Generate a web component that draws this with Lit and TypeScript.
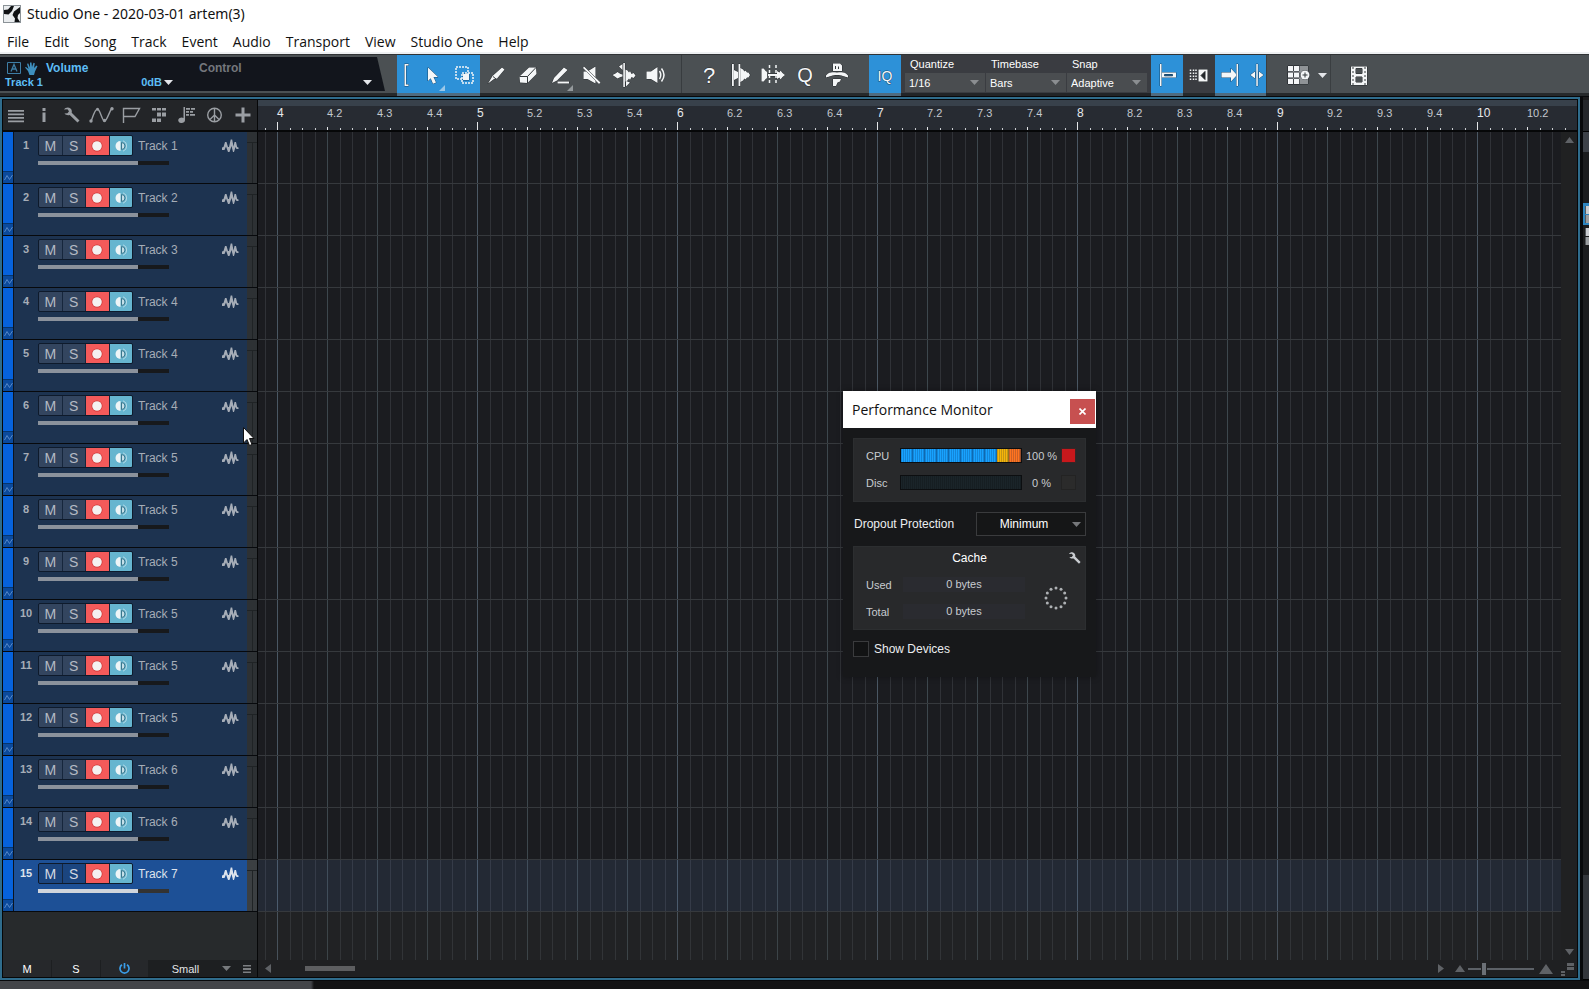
import { LitElement, html, css, svg } from "lit";
import { customElement, state } from "lit/decorators.js";
import { classMap } from "lit/directives/class-map.js";

const MENUS = ["File", "Edit", "Song", "Track", "Event", "Audio", "Transport", "View", "Studio One", "Help"];
const TRACKS = [1, 2, 3, 4, 4, 4, 5, 5, 5, 5, 5, 5, 6, 6, 7];
const BEATS = Array.from({ length: 26 }, (_, i) => {
  const bar = 4 + Math.floor(i / 4);
  return { bar: i % 4 === 0, label: i % 4 === 0 ? `${bar}` : `${bar}.${(i % 4) + 1}` };
});

const icon = (body: unknown, w = 26, h = 26) =>
  html`<svg class="ic" width=${w} height=${h} viewBox="0 0 ${w} ${h}" aria-hidden="true">${body}</svg>`;

const down = (cls = "") => html`<svg class="down ${cls}" width="9" height="5" viewBox="0 0 9 5" aria-hidden="true"><path d="M0 0h9L4.500 5z" /></svg>`;

const wrench = svg`<path d="M0 2.500C1 .5 4.500-.5 6.500 1.500 8 3 8 4.500 7.700 5.700L14.500 12.500 12.500 14.800 5.700 8C3.800 8.600 1.500 8 .5 6.500L3.500 6.200 5 4.200 3.500 2.300Z"/>`;

const HEAD_ICONS: Array<[string, unknown]> = [
  ["Track list", svg`<path d="M-1 3h16v1.700H-1zM-1 6.500h16v1.700H-1zM-1 10h16v1.700H-1zM-1 13.500h16v1.700H-1z"/>`],
  ["Inspector", svg`<path d="M5.500 1h3v3h-3zM5.500 5.500h3V15h-3z"/>`],
  ["Tools", svg`<path d="M-2 2.500C-1 .5 2.500-.5 4.500 1.500 6 3 6 4.500 5.700 5.700L13.500 13.500 11.500 15.500 3.700 8C1.800 8.600-.5 8-1.500 6.500L1.500 6.200 3 4.200 1.500 2.300Z"/>`],
  ["Automation", svg`<path class="ln" d="M-3 14.500C-1 9 1 2 3.500 2S8 14 10.500 14 15 5 18 1"/><circle cx="-3" cy="14" r="1.700"/><circle cx="3.500" cy="2.200" r="1.500"/><circle cx="10.500" cy="13.500" r="1.700"/><circle cx="18" cy="1.800" r="1.700"/>`],
  ["Markers", svg`<path class="ln" d="M1.500 16V1.500H17.500L13 9.500H1.500"/>`],
  ["Arranger", svg`<path d="M2 1h4v2.500H2zM7 1h4v2.500H7zM12 1h4v2.500h-4zM7 5.500h4v4H7zM12 5.500h4v4h-4zM2 11.500h4v3.500H2zM7 11.500h4v3.500H7z"/>`],
  ["Chords", svg`<path d="M5.500 0h1.500v13a3.400 2.700 0 1 1-1.500-2zM8 1h4v1.700H8zM13 1h4v1.700h-4zM8 4h3v1.700H8zM12 4h3v1.700h-3zM8 7h3v1.700H8zM12 7h5v1.700h-5z"/>`],
  ["Tempo", svg`<circle class="ln" cx="7.500" cy="8" r="6.800"/><path class="ln" d="M7.500 1.500V8L3 12.500M7.500 8l4.500 4.500M7.500 4v10"/>`],
  ["Add track", svg`<path d="M6.500.5h3v6h6v3h-6v6h-3v-6h-6v-3h6z"/>`],
];

const EDIT_TOOLS: Array<[string, unknown, boolean]> = [
  ["Split", svg`<path d="M5 21.500 9.500 14 19 5.500 21.500 7.500 14 16.500 11 17z"/><path class="dk" d="M10 14.500l3 2.500"/>`, false],
  ["Eraser", svg`<path d="M4.500 14.500 14 5.500h7L21.500 12 12.500 21 5 20.500z"/><path class="dk" d="M4.500 14.500h8l8.500-9M12.500 14.500v6.500"/>`, false],
  ["Paint", svg`<path d="M5 21 7 16 17 5.500 20.500 8 10 18.500z"/><path d="M10.500 19.500h11.500v2H10.500z"/>`, true],
  ["Mute", svg`<path d="M4.500 9.500h4L16.500 4.500v17L8.500 17h-4z"/><path d="M5 4.500 21.500 20.500 20 22 4 6z"/>`, false],
  ["Bend", svg`<path d="M12.300 1h1.600v24h-1.600zM8 4.500 11.500 2v6zM15 19l4 1.500-4 4zM1.500 13l3-1.500 2-1.500 3 2 2 .5v2l-2 .5-3 1.500-2-1.500zM14.500 7.500l2 1 1.500 2 1-1.500 1.500 3 2-1 2 2.500-2 2.500-2-1-1.500 3-1-1.500-1.500 2-2 1z"/>`, false],
  ["Listen", svg`<path d="M3.500 9.500h4.500L14.500 5v16L8 17H3.500z"/><path class="wl" d="M16.500 9q2.500 4 0 8M18.500 6.500q5 6.500 0 13"/>`, false],
];

const GRID_TOOLS: Array<[string, unknown]> = [
  ["Help", svg`<text x="13" y="21" text-anchor="middle" font-size="22">?</text>`],
  ["Strip silence", svg`<path d="M4 2h1.800v22H4zM10.500 2h1.800v22h-1.800zM6 8l4 2v6l-4 2zM12.500 6l2.500 1.500 1.500 2 1-1 1.500 2h1.500l1.500 2.500-1.500 2.500H19l-1.500 2-1-1-1.500 2-2.500 1.500z"/>`],
  ["Audio bend", svg`<path d="M1.500 6.500h2.200l2 2.500 1.500 1v6l-1.500 1-2 2.500H1.500zM8 12h10v2H8zM17 9l2.500 1.500 1-2 2 2.500 2.500 2-2.500 2-2 2.500-1-2L17 17z"/><path class="wl" stroke-dasharray="3 2" d="M9.500 3v20M16 3v20"/>`],
  ["Quantize", svg`<text x="13" y="20" text-anchor="middle" font-size="20">Q</text>`],
  ["Macro", svg`<path d="M9 1.500h7l2 2V9H9zM2 13.500C6 9 9 10.500 13 10.500s7-1.500 11 3v2c-4-1-6-2.500-11-2.500S6 14.500 2 15.500zM9 17h8l-1 2.500-2.500 1-1.500 3.500H9z"/><path class="dk" d="M11.500 4v3M14.500 4.500V7"/>`],
];

@customElement("track-row")
class TrackRow extends LitElement {
  static properties = { index: { type: Number }, name: { type: String }, selected: { type: Boolean } };
  declare index: number;
  declare name: string;
  declare selected: boolean;

  static styles = css`
    :host { display: block; height: 51px; border-bottom: 1px solid #07090c; }
    .row { display: grid; grid-template-columns: 10px 233px 10px; column-gap: 1px; height: 51px; background: #0b1420; font: 12px/16px "Liberation Sans", Arial, sans-serif; color: #a6adb7; }
    .stripe { display: flex; flex-direction: column; justify-content: flex-end; background: #0662dc; }
    .env { height: 11px; border-top: 1px solid #06366e; background: #0b4a9c; display: flex; align-items: center; justify-content: center; }
    .env svg { fill: none; stroke: #5688c8; }
    .main { display: grid; grid-template-columns: 24px 1fr; grid-template-rows: 21px 4px; row-gap: 5px; padding-top: 3px; background: #1d3350; align-content: start; }
    .no { text-align: center; font: bold 11px/20px "Liberation Sans", Arial, sans-serif; }
    .ctl { display: flex; align-items: center; }
    .btns { display: flex; gap: 1px; height: 21px; border: 1px solid #0e1a2b; border-radius: 2px; background: #16263c; box-sizing: border-box; width: 95px; overflow: hidden; }
    button { flex: 1; border: 0; padding: 0; background: #33455f; color: #b4bac4; font: 14px/18px "Liberation Sans", Arial, sans-serif; display: flex; align-items: center; justify-content: center; }
    .rec { background: #f45a5a; }
    .mon { background: #66b5cf; }
    .name { flex: 1; padding-left: 5px; }
    .wave { fill: #a6adb7; margin-right: 8px; }
    .vol { grid-column: 2; appearance: none; margin: 0; width: 131px; height: 4px; background: linear-gradient(90deg, #8b929c 76%, #17191c 76%); }
    .vol::-webkit-slider-thumb { appearance: none; width: 1px; height: 4px; opacity: 0; }
    .meter { margin-left: -1px; background: linear-gradient(#1f2325, #1f2325) 0 10px / 100% 1px no-repeat, linear-gradient(90deg, transparent 5px, #1f2325 5px, #1f2325 6px, transparent 6px) 0 11px no-repeat, #2d3134; }
    .sel .main { background: #1d5096; }
    .sel button.ms { background: #1b457f; color: #d3d9e2; }
    .sel, .sel .no { color: #dde3ec; }
    .sel .wave { fill: #dde3ec; }
    .sel .vol { background: linear-gradient(90deg, #d0d5dc 76%, #333 76%); }
    .sel .meter { background-color: #3b3f42; }
  `;

  render() {
    return html`<div class=${classMap({ row: true, sel: this.selected })}>
      <div class="stripe"><div class="env"><svg width="9" height="7" viewBox="0 0 9 7"><path d="M.5 6 3 1.500 5.500 5.500 8.500 1" /></svg></div></div>
      <div class="main">
        <div class="no">${this.index}</div>
        <div class="ctl">
          <div class="btns">
            <button class="ms" aria-label="Mute">M</button>
            <button class="ms" aria-label="Solo">S</button>
            <button class="rec" aria-label="Record"><svg width="12" height="12" viewBox="0 0 12 12"><circle cx="6" cy="6" r="5.500" fill="#c33" /><circle cx="6" cy="6" r="4.800" fill="#f4f1f0" /></svg></button>
            <button class="mon" aria-label="Monitor"><svg width="12" height="12" viewBox="0 0 12 12"><path d="M5.500 1v10a5 5 0 0 1 0-10z" fill="#eef5f7" /><path d="M6.500 2.500v7a3.500 3.500 0 0 0 0-7z" fill="#c4dfe8" stroke="#39778d" /><path d="M8 .8a5.500 5.500 0 0 1 0 10.400" fill="none" stroke="#b5dae6" /></svg></button>
          </div>
          <div class="name">${this.name}</div>
          <svg class="wave" width="18" height="14" viewBox="0 0 18 14"><path d="M1 8.500 2.500 8 4 3H5.500L7 8H8L9.700.5H11.200L12.500 7.500 13.500 3H15L16.200 8 17.500 8.500V10H15.500L14.500 8 13 13H12L10.500 7 8.500 13H7L5 7.500 3.500 11H1z" /></svg>
        </div>
        <input class="vol" type="range" min="0" max="100" value="76" aria-label="Volume of ${this.name}" />
      </div>
      <div class="meter"></div>
    </div>`;
  }
}

@customElement("performance-monitor")
class PerformanceMonitor extends LitElement {
  static styles = css`
    :host { display: block; width: 253px; background: #17181a; color: #eceef0; font: 12px/16px "Liberation Sans", Arial, sans-serif; box-shadow: 0 0 6px rgba(0, 0, 0, 0.35); }
    .bar { display: flex; align-items: center; justify-content: space-between; height: 37px; padding: 0 1px 0 9px; background: #fff; color: #111; font: 14px/20px "Open Sans", "Noto Sans", sans-serif; }
    .close { width: 25px; height: 25px; margin-top: 4px; border: 0; padding: 0; background: #c75050; display: flex; align-items: center; justify-content: center; }
    .body { display: flex; flex-direction: column; gap: 10px; padding: 10px 10px 20px; }
    .panel { background: #28292b; border: 1px solid #2c2e30; box-sizing: border-box; color: #c9ccd0; font-size: 11px; }
    .load { display: grid; grid-template-columns: 34px 122px 39px 15px; grid-auto-rows: 15px; row-gap: 12px; padding: 9px 9px 11px 12px; align-items: center; }
    .meter { box-sizing: border-box; height: 15px; border: 1px solid #0c0e10; background: repeating-linear-gradient(90deg, #1a2429 0 1px, #161e22 1px 2px); }
    .fill { height: 100%; background: repeating-linear-gradient(90deg, rgba(0, 20, 60, 0.2) 0 1px, transparent 1px 2px), repeating-linear-gradient(90deg, transparent 0 11px, rgba(0, 20, 60, 0.4) 11px 12px), linear-gradient(90deg, #18a2ff 80%, #f5b50a 80%, #f5b50a 90%, #ff7420 90%); }
    .val { text-align: center; }
    .led { box-sizing: border-box; height: 15px; border: 1px solid #232323; background: #2b2b2b; }
    .led.on { background: #c8181c; border-color: #3a2526; }
    .drop { display: flex; align-items: center; justify-content: space-between; height: 24px; padding-left: 1px; }
    .pick { display: grid; align-items: center; width: 110px; }
    .pick > * { grid-area: 1 / 1; }
    select { appearance: none; height: 24px; border: 1px solid #3a3b3d; background: #151617; color: #fff; font: 12px/16px "Liberation Sans", Arial, sans-serif; padding: 0 14px 0 0; text-align: center; text-align-last: center; border-radius: 0; }
    .down { justify-self: end; margin-right: 5px; fill: #76787b; pointer-events: none; }
    .cache { display: grid; grid-template-columns: 37px 122px 1fr; grid-template-rows: 30px 15px 12px 15px; padding: 0 4px 10px 12px; align-items: center; height: 84px; }
    .head { grid-column: 1 / -1; align-self: start; display: flex; align-items: center; justify-content: space-between; color: #fff; font-size: 12px; height: 22px; }
    .head span { flex: 1; text-align: center; padding-left: 4px; }
    .head button { border: 0; padding: 0; background: none; display: flex; fill: #c9ccd0; }
    .box { background: #2a2b30; text-align: center; height: 15px; line-height: 15px; }
    .t { grid-row: 4; }
    .spin { grid-row: 2 / 5; grid-column: 3; justify-self: center; margin-left: 5px; fill: #aeb1b4; }
    .chk { display: flex; align-items: center; gap: 5px; padding-top: 1px; }
    .chk input { appearance: none; margin: 0; width: 16px; height: 16px; border: 1px solid #3a3b3d; background: #121314; }
  `;

  render() {
    const dots = Array.from({ length: 12 }, (_, i) => {
      const a = (i * Math.PI) / 6;
      return svg`<circle cx=${12 + 10 * Math.sin(a)} cy=${12 - 10 * Math.cos(a)} r="1.500"/>`;
    });
    return html`
      <div class="bar">Performance Monitor<button class="close" aria-label="Close"><svg width="7" height="7" viewBox="0 0 7 7"><path d="M.5.5l6 6M6.500.5l-6 6" stroke="#fff" stroke-width="1.600" /></svg></button></div>
      <div class="body">
        <div class="panel load">
          <span>CPU</span><div class="meter" role="meter" aria-valuenow="100" aria-label="CPU"><div class="fill"></div></div><span class="val">100 %</span><span class="led on"></span>
          <span>Disc</span><div class="meter" role="meter" aria-valuenow="0" aria-label="Disc"></div><span class="val">0 %</span><span class="led"></span>
        </div>
        <div class="drop"><label for="dp">Dropout Protection</label>
          <div class="pick"><select id="dp"><option>Minimum</option></select>${down()}</div></div>
        <div class="panel cache">
          <div class="head"><span>Cache</span><button aria-label="Cache settings"><svg width="12" height="12" viewBox="0 0 15 15">${wrench}</svg></button></div>
          <span>Used</span><span class="box">0 bytes</span>
          <span class="t">Total</span><span class="box t">0 bytes</span>
          <svg class="spin" width="24" height="24" viewBox="0 0 24 24">${dots}</svg>
        </div>
        <label class="chk"><input type="checkbox" />Show Devices</label>
      </div>`;
  }
}

@customElement("app-root")
class AppRoot extends LitElement {
  @state() private selected = 14;

  static styles = css`
    :host { display: flex; flex-direction: column; height: 100vh; overflow: hidden; position: relative; background: #111214; color: #fff; font: 11px/14px "Liberation Sans", Arial, sans-serif; }
    button { border: 0; padding: 0; margin: 0; background: none; color: inherit; font: inherit; }
    .title { display: flex; align-items: center; gap: 6px; height: 28px; padding: 0 3px; background: #fff; color: #111; font: 14px/20px "Noto Sans", "Open Sans", sans-serif; }
    .menu { display: flex; align-items: center; gap: 15px; height: 26px; padding: 3px 7px 0; box-sizing: border-box; border-bottom: 2px solid #eef0f2; background: #fff; font: 14px/20px "Open Sans", "Noto Sans", sans-serif; }
    .menu a { color: #111; text-decoration: none; }

    .tools { display: flex; height: 42px; background: #4b5053; border-top: 1px solid #303335; border-bottom: 3px solid #26292b; box-sizing: border-box; }
    .param { width: 385px; height: 34px; margin: 2px 12px 0 0; box-sizing: border-box; padding: 4px 12px 0 5px; background: #12151c; clip-path: polygon(0 0, 377px 0, 385px 100%, 0 100%); color: #5dbdf5; font-weight: bold; display: grid; grid-template-columns: 194px 1fr; grid-template-rows: 14px 14px; }
    .param div { display: flex; align-items: center; }
    .param .vol { font-size: 12px; gap: 4px; padding-left: 2px; }
    .param .vol span { padding-left: 4px; }
    .param .ctl { font-size: 12px; color: #74777c; }
    .param .trk { font-size: 11px; justify-content: space-between; padding-right: 26px; }
    .param .val { gap: 2px; }
    .param .end { justify-content: flex-end; padding-right: 1px; }
    .down { fill: #8b8e91; }
    .down.lt { fill: #e4e6ea; }
    .set { display: flex; height: 38px; }
    .set button { width: 32px; display: flex; align-items: center; justify-content: center; position: relative; padding-top: 2px; }
    .set button.br { width: 19px; }
    .set button.w20 { width: 19px; }
    .blue { background: #2d91d8; box-shadow: 0 3px 0 #4f6b80; }
    .ic { fill: #f4f6f7; stroke: #272b2e; stroke-width: 1; paint-order: stroke; overflow: visible; font-family: "Liberation Sans", Arial, sans-serif; }
    .blue .ic { stroke: #174a72; }
    .ic .dk { fill: none; stroke: #33383b; }
    .ic .wl { fill: none; stroke: #f4f6f7; stroke-width: 1.500; }
    .corner { position: absolute; right: 3px; bottom: 2px; border: 3px solid #94999c; border-top-color: transparent; border-left-color: transparent; }
    .blue .corner { border-right-color: #9cc8e8; border-bottom-color: #9cc8e8; }
    .gap { width: 10px; border-right: 1px solid #383c3f; margin-right: 11px; box-sizing: border-box; }
    .gap2 { width: 16px; }
    .opts { display: flex; gap: 1px; padding: 0 4px; background: #3a3c41; box-shadow: 0 3px 0 #222427; }
    .opt { display: grid; grid-template: 18px 19px / 80px; align-items: center; }
    .opt label { padding-left: 5px; }
    .opt select { grid-area: 2 / 1; height: 19px; border: 0; border-radius: 0; appearance: none; background: #4a4d50; color: #fff; font: 11px/14px "Liberation Sans", Arial, sans-serif; padding: 0 16px 0 4px; }
    .opt .down { grid-area: 2 / 1; justify-self: end; margin-right: 6px; pointer-events: none; }
    .dark { background: #3a3c41; }
    .vsep { width: 1px; background: #3a3e41; }
    .set button.preset { width: 64px; padding-left: 18px; box-sizing: border-box; gap: 8px; border-right: 1px solid #3a3e41; }
    .set button.film { width: 56px; }

    .work { flex: 1; min-height: 0; display: grid; grid-template-columns: 1fr 6px; column-gap: 3px; padding: 1px 0; background: #08090b; }
    .frame { border: 2px solid #2f6c8c; padding: 1px; background: #060708; display: grid; grid-template: 32px 1fr 17px / 254px 1fr; column-gap: 1px; min-height: 0; min-width: 0; }
    .side { display: flex; flex-direction: column; padding-top: 3px; background: #1b1b1c; }
    .side i { display: block; }
    .s1 { height: 31px; background: #25272b; }
    .s2 { height: 20px; background: #3d4148; border-top: 1px solid #000; }
    .s3 { height: 51px; background: #1b1c1e; }
    .side .sb { height: 22px; background: #2d85c0; display: flex; flex-direction: column; justify-content: center; padding-left: 2px; }
    .side .sb i, .side .sg i { height: 8px; background: #c9ccd0; border-left: 1px solid #55595d; }
    .side .sb i + i, .side .sg i + i { background: #9a9da0; margin-top: 1px; }
    .side .sg { height: 22px; display: flex; flex-direction: column; justify-content: center; padding-left: 2px; }
    .s4 { flex: 1; background: #1b1c1e; }
    .s5 { height: 104px; background: #33363b; border-bottom: 1px solid #000; }

    .heads { display: flex; background: #232528; border-bottom: 2px solid #08090a; }
    .heads button { flex: 1; display: flex; align-items: center; justify-content: center; fill: #9a9ea3; }
    .heads svg { overflow: visible; }
    .ln { fill: none; stroke: #9a9ea3; stroke-width: 1.400; }
    .ruler { box-sizing: border-box; display: flex; overflow: hidden; padding-left: 19px; border-bottom: 2px solid #060708; min-width: 0;
      background:
        linear-gradient(90deg, #e4e6e8 1px, transparent 1px) 19px 22px / 200px 8px repeat-x,
        linear-gradient(90deg, #e4e6e8 1px, transparent 1px) 19px 27px / 50px 3px repeat-x,
        linear-gradient(90deg, #c9ccd0 1px, transparent 1px 13px, #c9ccd0 13px 14px, transparent 14px) 19px 28px / 25px 2px repeat-x,
        linear-gradient(#38414b 6px, #272b32 6px); }
    .ruler span { flex: 0 0 50px; padding-top: 6px; color: #c3c8ce; box-sizing: border-box; }
    .ruler .bar { font-size: 12px; color: #e6e9ec; }

    .list { background: #272a2c; overflow: hidden; }
    .arrange { display: grid; grid-template-columns: 1fr 16px; min-width: 0; overflow: hidden; }
    .grid { overflow: hidden; display: flex; flex-direction: column;
      background:
        linear-gradient(90deg, #4a5763 1px, transparent 1px) 19px 0 / 200px 100%,
        linear-gradient(90deg, #3d474d 1px, transparent 1px) 19px 0 / 50px 100%,
        linear-gradient(90deg, #303237 1px, transparent 1px 13px, #303237 13px 14px, transparent 14px) 19px 0 / 25px 100%,
        #1b1c20; }
    .lane { flex: 0 0 51px; border-bottom: 1px solid #36393d; }
    .lane.sel { background: rgba(80, 110, 160, 0.16); }
    .rest { flex: 1; background: rgba(60, 62, 56, 0.2); }
    .vscroll { display: flex; flex-direction: column; align-items: center; justify-content: space-between; padding: 5px 0; background: #202122; fill: #5f6266; }

    .foot { display: grid; grid-template-columns: 48px 48px 47px 1fr 20px; column-gap: 1px; background: #1d1f21; }
    .foot button { display: flex; align-items: center; justify-content: center; background: #26282b; }
    .foot button.lines { background: none; }
    .size { display: grid; align-items: center; }
    .size > * { grid-area: 1 / 1; }
    .size select { appearance: none; border: 0; background: none; color: #e2e4e6; font: 11px/14px "Liberation Sans", Arial, sans-serif; padding: 0 14px 0 0; text-align: center; text-align-last: center; }
    .size .down { justify-self: end; margin-right: 5px; pointer-events: none; fill: #76797c; }
    .zoomer { display: flex; align-items: center; background: #1f2022; fill: #5f6266; padding: 0 2px 0 7px; }
    .hthumb { width: 50px; height: 5px; margin-left: 34px; background: #5d5e60; }
    .fill { flex: 1; }
    .zoomer input { appearance: none; width: 66px; height: 12px; margin: 0 5px 0 3px; background: linear-gradient(#5c6167, #5c6167) 0 5px / 100% 2px no-repeat; }
    .zoomer input::-webkit-slider-thumb { appearance: none; width: 4px; height: 12px; background: #6b7076; box-shadow: 0 0 0 1px #1f2022; }
    .status { height: 8px; background: linear-gradient(90deg, #434549 311px, #131314 314px); }

    .float { position: absolute; left: 843px; top: 391px; z-index: 2; }
    .pointer { position: absolute; left: 243px; top: 427px; z-index: 3; fill: #fff; stroke: #111; overflow: visible; pointer-events: none; }
  `;

  private tool(name: string, body: unknown, corner = false) {
    return html`<button aria-label=${name}>${icon(body)}${corner ? html`<i class="corner"></i>` : ""}</button>`;
  }

  private option(id: string, label: string, value: string) {
    return html`<div class="opt"><label for=${id}>${label}</label><select id=${id}><option>${value}</option></select>${down()}</div>`;
  }

  render() {
    return html`
      <div class="title">
        <svg width="18" height="18" viewBox="0 0 18 18"><path d="M0 0h18v18H0z" fill="#8b9297" /><path d="M1 1h16v16H1z" fill="#e9ecee" /><path d="M1 5 5 4.500 8 1h3L9 6 5.500 9.500 1 9zM17 2 11 6.500 9.500 10 12 13.500 11.500 17H17l-2.500-4 .5-3L17 8z" fill="#101214" /></svg>
        Studio One - 2020-03-01 artem(3)
      </div>
      <nav class="menu">${MENUS.map((m) => html`<a href="#">${m}</a>`)}</nav>
      <div class="tools">
        <div class="param">
          <div class="vol">
            <svg width="14" height="12" viewBox="0 0 14 12"><path d="M.5.5h13v11H.5z" fill="none" stroke="#3e7ea6" /><path d="M4 9.500 7 2.500l3 7M5 7h4" fill="none" stroke="#3e7ea6" stroke-width="1.300" /></svg>
            <svg width="13" height="13" viewBox="0 0 13 13"><path d="M3 9 0 5.500 1 5l2.500 2L2 1.800 3.300 1.500 5 5.500 5 .5h1.500L7 5 8.500.8 9.800 1.200 9 6l2.500-2.500 1 .8L10 9.500 9 13H4.500z" fill="#3e8fbe" /></svg>
            <span>Volume</span>
          </div>
          <div class="ctl">Control</div>
          <div class="trk"><span>Track 1</span><div class="val">0dB ${down("lt")}</div></div>
          <div class="end">${down("lt")}</div>
        </div>
        <div class="set blue">
          <button class="br" aria-label="Range">${icon(svg`<path d="M4.500 2v1.500H2v19h2.500V24H.5V2z"/>`, 5)}</button>
          ${this.tool("Arrow", svg`<path d="M9 5.500 19 15h-4.500l2.500 5.500-3 1.200-2.300-5.500L9 19z"/>`, true)}
          ${this.tool("Marquee", svg`<path d="M12 12h6v6h-6z"/><path class="wl" stroke-dasharray="2 1" d="M5 5h12v12H5zM11 11h11v10H11z"/>`)}
        </div>
        <div class="set">${EDIT_TOOLS.map(([n, b, c]) => this.tool(n, b, c))}</div>
        <div class="gap"></div>
        <div class="set">${GRID_TOOLS.map(([n, b]) => this.tool(n, b))}</div>
        <div class="gap2"></div>
        <div class="set blue">${this.tool("Input quantize", svg`<text x="13" y="19" text-anchor="middle" font-size="14">IQ</text>`)}</div>
        <div class="opts">
          ${this.option("q", "Quantize", "1/16")}${this.option("tb", "Timebase", "Bars")}${this.option("sn", "Snap", "Adaptive")}
        </div>
        <div class="set blue">${this.tool("Snap to grid", svg`<path d="M6 2h1.500v22H6zM8 10.500h14v5H8z"/><path d="M10.500 12.500h8v1.300h-8z" fill="#174a72"/>`)}</div>
        <div class="set dark">${this.tool("Snap to events", svg`<path d="M12.500 7.500h9v12h-9z"/><path d="M19 9.500v8l-4-4z" fill="#22262a"/><path class="wl" stroke-dasharray="1.500 1.500" d="M4.500 7.500v12M7.500 7.500v12M10 7.500v12"/>`)}</div>
        <div class="set blue">
          ${this.tool("Autoscroll", svg`<path d="M3.500 10.500H13V6.500l6 6.500-6 6.500v-4H3.500z"/><path d="M18.500 2H20v22h-1.500z"/>`)}
          <button class="w20" aria-label="Cursor follows">${icon(svg`<path d="M6.300 2h1.500v22H6.300zM5 9.500v7L.5 13zM9 9.500v7l4.500-3.500z"/>`, 14)}</button>
        </div>
        <div class="vsep"></div>
        <div class="set">
          <button class="preset" aria-label="Grid presets">${icon(svg`<path d="M0 4h20v18H0z" fill="#8f9396"/><path d="M0 4h5v5H0zM6 4h5v5H6zM0 10.500h5v5H0zM6 10.500h5v5H6zM0 17h5v5H0zM6 17h5v5H6z"/><circle cx="17" cy="13" r="4.500"/><path class="dk" d="M14.500 13h5M17 10.500v5"/>`, 22)}${down("lt")}</button>
          <button class="film" aria-label="Video">${icon(svg`<path d="M5 4.500h16v18.500H5z"/><path d="M10 6.500h6v5h-6zM10 15h6v5h-6z" fill="#4b5053"/><path class="dk" stroke-dasharray="2 2" d="M7 5v18M19 5v18"/>`)}</button>
        </div>
      </div>

      <div class="work">
        <div class="frame">
          <div class="heads">${HEAD_ICONS.map(([n, b]) => html`<button aria-label=${n}><svg width="16" height="16" viewBox="0 0 16 16">${b}</svg></button>`)}</div>
          <div class="ruler">${BEATS.map((b) => html`<span class=${b.bar ? "bar" : ""}>${b.label}</span>`)}</div>
          <div class="list">
            ${TRACKS.map((n, i) => html`<track-row .index=${i + 1} .name=${`Track ${n}`} .selected=${i === this.selected} @click=${() => (this.selected = i)}></track-row>`)}
          </div>
          <div class="arrange">
            <div class="grid">
              ${TRACKS.map((_, i) => html`<div class=${classMap({ lane: true, sel: i === this.selected })}></div>`)}
              <div class="rest"></div>
            </div>
            <div class="vscroll"><svg width="9" height="6" viewBox="0 0 9 6"><path d="M0 6h9L4.500 0z" /></svg><svg width="9" height="6" viewBox="0 0 9 6"><path d="M0 0h9L4.500 6z" /></svg></div>
          </div>
          <div class="foot">
            <button aria-label="Mute all">M</button>
            <button aria-label="Solo all">S</button>
            <button aria-label="Automation power"><svg width="11" height="11" viewBox="0 0 11 11"><path d="M3 1.800a4.500 4.500 0 1 0 5 0M5.500 0v5.500" fill="none" stroke="#3a9de8" stroke-width="1.700" /></svg></button>
            <div class="size"><select aria-label="Track size"><option>Small</option></select>${down()}</div>
            <button class="lines" aria-label="Track options"><svg width="8" height="8" viewBox="0 0 8 8" fill="#7c7f82"><path d="M0 0h8v1.500H0zM0 3h8v2H0zM0 6.500h8V8H0z" /></svg></button>
          </div>
          <div class="zoomer">
            <svg width="6" height="9" viewBox="0 0 6 9"><path d="M6 0v9L0 4.500z" /></svg>
            <div class="hthumb"></div>
            <div class="fill"></div>
            <svg width="18" height="9" viewBox="0 0 18 9"><path d="M1 0v9l6-4.500z" /></svg>
            <svg width="10" height="7" viewBox="0 0 10 7"><path d="M0 7h10L5 0z" /></svg>
            <input type="range" min="0" max="100" value="23" aria-label="Horizontal zoom" />
            <svg width="36" height="14" viewBox="0 0 36 14"><path d="M0 12h14L7 2zM22 9h4v2h-4zM22 12h4v2h-4zM28 1h7v3h-7zM28 5h7v3h-7z" /></svg>
          </div>
        </div>
        <div class="side"><i class="s1"></i><i class="s2"></i><i class="s3"></i><div class="sb"><i></i><i></i></div><div class="sg"><i></i><i></i></div><i class="s4"></i><i class="s5"></i></div>
      </div>
      <div class="status"></div>
      <performance-monitor class="float"></performance-monitor>
      <svg class="pointer" width="12" height="19" viewBox="0 0 12 19" aria-hidden="true"><path d="M.5.500V16l3.500-3.500L6.500 18.500 9 17.500 6.500 11.500H11z" /></svg>
    `;
  }
}
